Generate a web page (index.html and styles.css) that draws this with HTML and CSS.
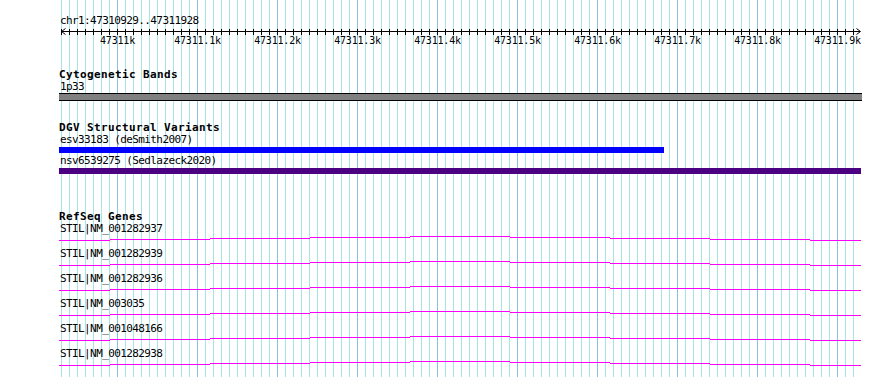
FILE: index.html
```html
<!DOCTYPE html>
<html lang="en">
<head>
  <meta charset="UTF-8">
  <title>chr1:47310929..47311928</title>
  <link rel="stylesheet" href="styles.css">
</head>
<body>
  <svg class="defs" width="0" height="0">
    <symbol id="intron" viewBox="0 0 803 13">
      <rect x="0" y="5" width="51" height="1"/>
      <rect x="51" y="4" width="100" height="1"/>
      <rect x="151" y="3" width="100" height="1"/>
      <rect x="251" y="2" width="100" height="1"/>
      <rect x="351" y="1" width="100" height="1"/>
      <rect x="451" y="2" width="100" height="1"/>
      <rect x="551" y="3" width="100" height="1"/>
      <rect x="651" y="4" width="100" height="1"/>
      <rect x="751" y="5" width="51" height="1"/>
    </symbol>
  </svg>

  <div class="tracks">
    <!-- grid: light line every 10bp, darker one every 100bp -->
    <svg class="grid" width="795" height="377" viewBox="0 0 795 377">
      <defs>
        <pattern id="minor" x="2" y="0" width="8" height="377" patternUnits="userSpaceOnUse">
          <rect x="0" y="0" width="1" height="377" fill="#a9e3ea"/>
        </pattern>
        <pattern id="major" x="58" y="0" width="80" height="377" patternUnits="userSpaceOnUse">
          <rect x="0" y="0" width="1" height="377" fill="#86c3e6"/>
        </pattern>
      </defs>
      <rect x="2" y="0" width="793" height="377" fill="url(#minor)"/>
      <rect x="58" y="0" width="721" height="377" fill="url(#major)"/>
    </svg>

    <div class="label">chr1:47310929..47311928</div>

    <!-- ruler -->
    <svg class="ruler" width="803" height="20" viewBox="0 0 803 20">
      <defs>
        <pattern id="ticks" x="2" y="0" width="8" height="20" patternUnits="userSpaceOnUse">
          <rect x="0" y="1" width="1" height="6"/>
        </pattern>
      </defs>
      <rect x="2" y="0" width="793" height="8" fill="url(#ticks)"/>
      <rect x="2" y="3" width="799" height="1"/>
      <polyline class="arrow" points="6.5,0.5 2.5,3.5 6.5,6.5"/>
      <polyline class="arrow" points="797.5,0.5 801.5,3.5 797.5,6.5"/>
      <text x="58.5" y="16">47311k</text>
      <text x="138.5" y="16">47311.1k</text>
      <text x="218.5" y="16">47311.2k</text>
      <text x="298.5" y="16">47311.3k</text>
      <text x="378.5" y="16">47311.4k</text>
      <text x="458.5" y="16">47311.5k</text>
      <text x="538.5" y="16">47311.6k</text>
      <text x="618.5" y="16">47311.7k</text>
      <text x="698.5" y="16">47311.8k</text>
      <text x="778.5" y="16">47311.9k</text>
    </svg>

    <!-- Cytogenetic Bands -->
    <div class="track track-cyto">
      <div class="track-title">Cytogenetic Bands</div>
      <div class="label">1p33</div>
      <div class="band"></div>
    </div>

    <!-- DGV -->
    <div class="track track-dgv">
      <div class="track-title">DGV Structural Variants</div>
      <div class="label">esv33183 (deSmith2007)</div>
      <div class="sv sv-loss" style="width: 605px"></div>
      <div class="label sv-label">nsv6539275 (Sedlazeck2020)</div>
      <div class="sv sv-complex" style="width: 802px"></div>
    </div>

    <!-- RefSeq Genes -->
    <div class="track track-genes">
      <div class="track-title">RefSeq Genes</div>
      <div class="gene">
        <div class="label">STIL|NM_001282937</div>
        <svg class="gene-line" width="803" height="13"><use href="#intron"/></svg>
      </div>
      <div class="gene">
        <div class="label">STIL|NM_001282939</div>
        <svg class="gene-line" width="803" height="13"><use href="#intron"/></svg>
      </div>
      <div class="gene">
        <div class="label">STIL|NM_001282936</div>
        <svg class="gene-line" width="803" height="13"><use href="#intron"/></svg>
      </div>
      <div class="gene">
        <div class="label">STIL|NM_003035</div>
        <svg class="gene-line" width="803" height="13"><use href="#intron"/></svg>
      </div>
      <div class="gene">
        <div class="label">STIL|NM_001048166</div>
        <svg class="gene-line" width="803" height="13"><use href="#intron"/></svg>
      </div>
      <div class="gene">
        <div class="label">STIL|NM_001282938</div>
        <svg class="gene-line" width="803" height="13"><use href="#intron"/></svg>
      </div>
    </div>
  </div>
</body>
</html>
```

FILE: styles.css
```css
* {
  margin: 0;
  padding: 0;
  box-sizing: border-box;
}

html, body {
  background: #fff;
}

body {
  overflow: hidden;
  font-family: "DejaVu Sans Mono", "Liberation Mono", monospace;
  font-size: 11px;
  line-height: 12px;
  letter-spacing: -0.6px;
  color: #000;
}

.defs {
  display: block;
  width: 0;
  height: 0;
}

.tracks {
  position: relative;
  z-index: 0;
  width: 795px;
  height: 377px;
  margin-left: 59px;
  padding-top: 15px;
}

/* grid sits under every track */
.grid {
  position: absolute;
  top: 0;
  left: 0;
  z-index: -1;
  shape-rendering: crispEdges;
}

.label {
  padding-left: 1px;
  white-space: nowrap;
}

.ruler {
  display: block;
  margin-top: 1px;
  overflow: visible;
  shape-rendering: crispEdges;
}

.ruler text {
  font-family: "DejaVu Sans Mono", "Liberation Mono", monospace;
  font-size: 10px;
  letter-spacing: -0.2px;
  text-anchor: middle;
}

.ruler .arrow {
  fill: none;
  stroke: #000;
  stroke-width: 1;
  shape-rendering: auto;
}

.track-title {
  font-weight: bold;
  letter-spacing: 0.38px;
  white-space: nowrap;
}

.track-cyto {
  margin-top: 21px;
}

.band {
  width: 803px;
  height: 8px;
  background: #808080;
  border-top: 1px solid #000;
  border-bottom: 1px solid #000;
}

.track-dgv {
  margin-top: 21px;
}

.sv {
  height: 6px;
  margin-top: 1px;
}

.sv-loss {
  background: #0000ff;
}

.sv-complex {
  background: #4b0082;
}

.sv-label {
  margin-top: 2px;
}

.track-genes {
  margin-top: 37px;
}

.gene {
  height: 25px;
}

.gene-line {
  display: block;
  overflow: visible;
  fill: #ff00ff;
  shape-rendering: crispEdges;
}
```
